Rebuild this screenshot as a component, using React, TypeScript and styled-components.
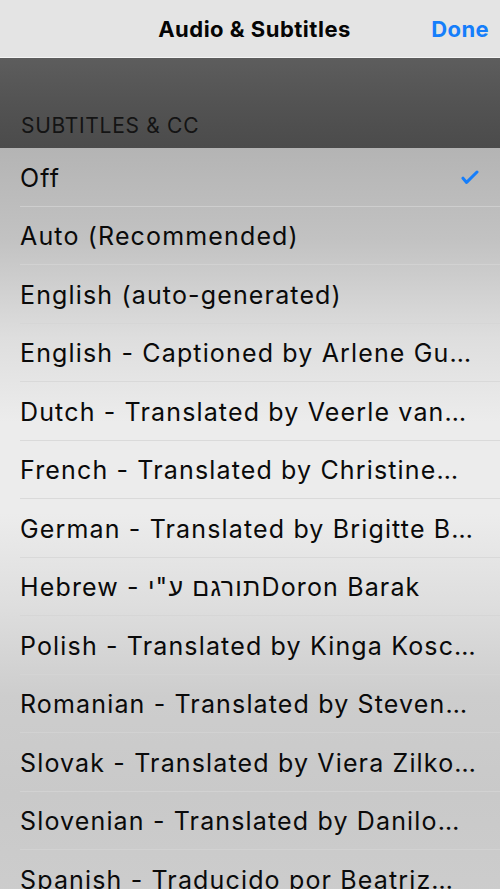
import styled, { createGlobalStyle } from "styled-components";

const tracks = [
    "Off",
    "Auto (Recommended)",
    "English (auto-generated)",
    "English - Captioned by Arlene Gu…",
    "Dutch - Translated by Veerle van…",
    "French - Translated by Christine…",
    "German - Translated by Brigitte B…",
    "Hebrew - תורגם ע\"יDoron Barak",
    "Polish - Translated by Kinga Kosc…",
    "Romanian - Translated by Steven…",
    "Slovak - Translated by Viera Zilko…",
    "Slovenian - Translated by Danilo…",
    "Spanish - Traducido por Beatriz…",
];

function CheckIcon() {
    return (
        <svg width="18" height="15" viewBox="0 0 18 15" fill="none">
            <path
                d="M2 8.2 L5.6 12.4 L16 2"
                stroke="#157efb"
                strokeWidth="3"
                strokeLinecap="round"
                strokeLinejoin="round"
            />
        </svg>
    );
}

function App() {
    const selected = 0;

    return (
        <>
            <GlobalStyle />
            <Screen>
                <NavBar>
                    <span />
                    <Title>Audio &amp; Subtitles</Title>
                    <DoneButton>Done</DoneButton>
                </NavBar>
                <SectionHeader>
                    <span>SUBTITLES &amp; CC</span>
                </SectionHeader>
                <List>
                    {tracks.map((label, i) => (
                        <Row key={label}>
                            <RowInner>
                                <Label>{label}</Label>
                                {i === selected && (
                                    <CheckSlot>
                                        <CheckIcon />
                                    </CheckSlot>
                                )}
                            </RowInner>
                        </Row>
                    ))}
                </List>
            </Screen>
        </>
    );
}

export default App;

const GlobalStyle = createGlobalStyle`
    html, body {
        margin: 0;
        padding: 0;
    }

    body {
        font-family: Inter, "Liberation Sans", "DejaVu Sans", sans-serif;
        -webkit-font-smoothing: antialiased;
    }
`;

const Screen = styled.div`
    display: flex;
    flex-direction: column;
    width: 500px;
    height: 889px;
    overflow: hidden;
    background: #cacaca;
`;

const NavBar = styled.header`
    display: grid;
    grid-template-columns: 1fr auto 1fr;
    align-items: center;
    flex: none;
    height: 58px;
    padding: 0 11px 0 20px;
    box-sizing: border-box;
    background: #e4e4e4;
    border-bottom: 1px solid #f4f4f4;
`;

const Title = styled.h1`
    margin: 0;
    font-size: 22px;
    font-weight: 700;
    color: #050505;
    letter-spacing: 0.5px;
`;

const DoneButton = styled.button`
    justify-self: end;
    padding: 0;
    border: none;
    background: none;
    font-family: inherit;
    font-size: 22px;
    font-weight: 700;
    color: #157efb;
    letter-spacing: 0.4px;
    cursor: pointer;
`;

const SectionHeader = styled.div`
    display: flex;
    align-items: flex-end;
    flex: none;
    height: 90px;
    padding: 0 21px 10px;
    box-sizing: border-box;
    background: linear-gradient(180deg, #5d5d5d 0%, #535353 50%, #4b4b4b 100%);
    font-size: 21px;
    color: #141414;
    letter-spacing: 0.7px;
`;

const List = styled.ul`
    flex: 1;
    margin: 0;
    padding: 0;
    list-style: none;
    background: linear-gradient(
        180deg,
        #b4b4b4 0%,
        #c2c2c2 12%,
        #dedede 25%,
        #ececec 36%,
        #ececec 48%,
        #dedede 60%,
        #cdcdcd 72%,
        #c9c9c9 85%,
        #cdcdcd 100%
    );
`;

const Row = styled.li`
    height: 58.5px;
    padding-left: 20px;
    box-sizing: border-box;
`;

const RowInner = styled.div`
    display: flex;
    align-items: center;
    justify-content: space-between;
    height: 100%;
    padding: 2px 10px 0 0;
    box-sizing: border-box;
    border-bottom: 1px solid rgba(212, 212, 212, 0.75);
`;

const Label = styled.span`
    overflow: hidden;
    white-space: nowrap;
    text-overflow: ellipsis;
    font-size: 25px;
    color: #0a0a0a;
    letter-spacing: 1.15px;
`;

const CheckSlot = styled.span`
    display: flex;
    margin-right: 11px;
`;
